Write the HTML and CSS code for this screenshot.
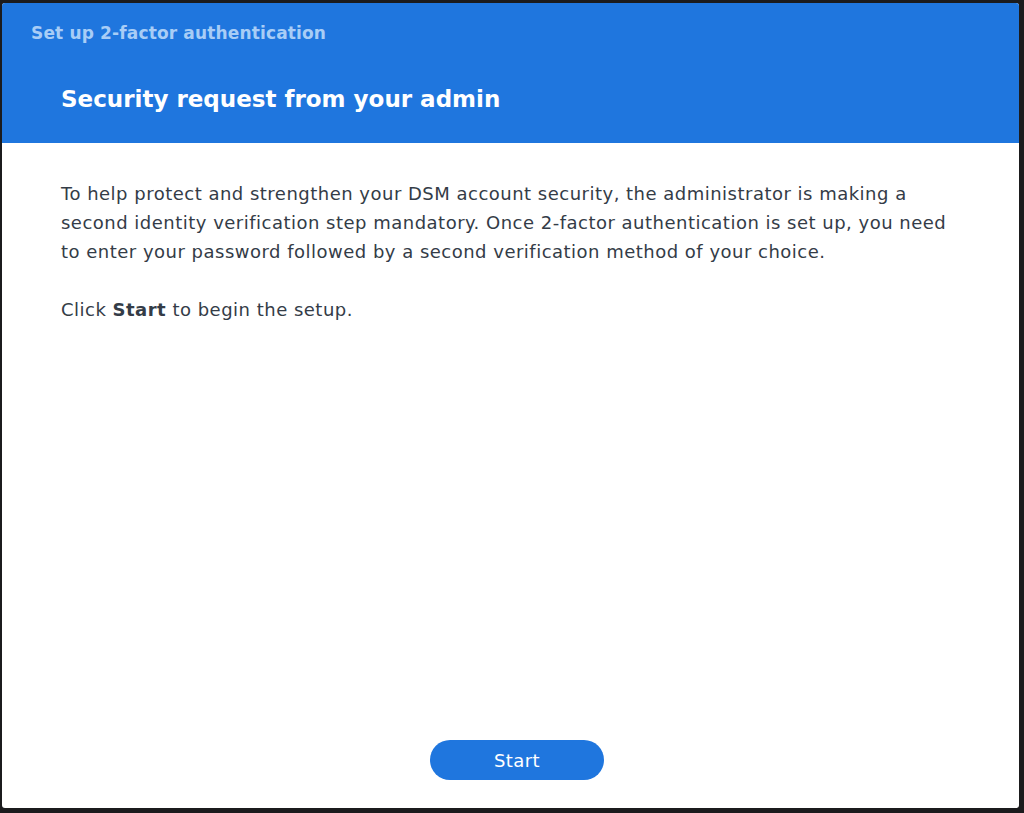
FILE: index.html
```html
<!DOCTYPE html>
<html>
<head>
<meta charset="utf-8">
<link rel="stylesheet" href="styles.css">
</head>
<body>
<div class="dialog">
  <div class="header">
    <div class="wintitle">Set up 2-factor authentication</div>
    <h1 class="heading">Security request from your admin</h1>
  </div>
  <div class="content">
    <p>To help protect and strengthen your DSM account security, the administrator is making a second identity verification step mandatory. Once 2-factor authentication is set up, you need to enter your password followed by a second verification method of your choice.</p>
    <p>Click <b>Start</b> to begin the setup.</p>
  </div>
  <div class="footer">
    <button class="start">Start</button>
  </div>
</div>
</body>
</html>
```
FILE: styles.css
```css
html, body {
  margin: 0;
  padding: 0;
  height: 100%;
}
body {
  background: #1b1b1d;
  font-family: "DejaVu Sans", Verdana, sans-serif;
  padding: 3px 5px 5px 2px;
  box-sizing: border-box;
  display: flex;
}
.dialog {
  flex: 1;
  background: #fff;
  border-radius: 3px;
  overflow: hidden;
  display: flex;
  flex-direction: column;
}
.header {
  background: #1f76de;
  height: 140px;
  box-sizing: border-box;
  padding: 20px 0 0 29px;
}
.wintitle {
  color: #a8cdf6;
  font-weight: bold;
  font-size: 17px;
  letter-spacing: 0.15px;
  line-height: 21px;
}
.heading {
  margin: 41px 0 0 30px;
  color: #fff;
  font-size: 23px;
  line-height: 28px;
  font-weight: bold;
}
.content {
  flex: 1;
  padding: 36px 59px 0 59px;
  color: #343c47;
  font-size: 18px;
  letter-spacing: 0.49px;
  line-height: 29px;
}
.content p {
  margin: 0 0 29px 0;
}
.footer {
  display: flex;
  justify-content: center;
  padding: 0 0 28px 13px;
}
.start {
  width: 174px;
  height: 40px;
  border: none;
  border-radius: 20px;
  background: #1f76de;
  color: #fff;
  font-family: "DejaVu Sans", Verdana, sans-serif;
  font-size: 18px;
  letter-spacing: 0.4px;
}
```
